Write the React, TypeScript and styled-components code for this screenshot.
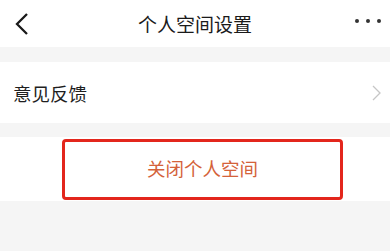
import { createGlobalStyle } from "styled-components";
import styled from "styled-components";

const GlobalStyle = createGlobalStyle`
	html, body {
		margin: 0;
		padding: 0;
		background-color: #f5f5f5;
		font-family: "Noto Sans CJK SC", "Noto Sans", sans-serif;
	}
`

const Page = styled.div`
	width: 390px;
	min-height: 251px;
	background-color: #f5f5f5;
	display: flex;
	flex-direction: column;
`

const Header = styled.header`
	height: 47px;
	display: grid;
	grid-template-columns: 60px 1fr 60px;
	align-items: center;
	background-color: #fff;
	.title {
		text-align: center;
		font-size: 19px;
		color: #1a1a1a;
		line-height: 1;
		padding-bottom: 1px;
	}
	.back {
		padding-left: 14px;
		display: flex;
	}
	.more {
		display: flex;
		justify-content: flex-end;
		gap: 7px;
		padding-right: 9px;
		padding-bottom: 5px;
	}
	.more span {
		width: 4px;
		height: 4px;
		border-radius: 50%;
		background-color: #333;
	}
`

const Section = styled.section<{ $top: number }>`
	margin-top: ${(p) => p.$top}px;
	background-color: #fff;
`

const Row = styled.div`
	height: 61px;
	display: flex;
	align-items: center;
	justify-content: space-between;
	padding: 0 8px 0 13px;
	font-size: 18.5px;
	color: #1f1f1f;
`

const CloseBox = styled.div`
	height: 64px;
	display: flex;
	align-items: center;
	padding-left: 62px;
`

const CloseButton = styled.button`
	width: 281px;
	height: 61px;
	border: 3px solid #e3261c;
	border-radius: 4px;
	background-color: #fff;
	color: #d4623a;
	font-family: inherit;
	font-size: 18.5px;
	padding: 0 0 2px;
	cursor: pointer;
`

const App = () => {
	return <>
		<GlobalStyle />
		<Page>
			<Header>
				<div className="back">
					<svg width="16" height="24" viewBox="0 0 16 24">
						<path d="M13 2 L3 12 L13 22" fill="none" stroke="#1a1a1a" strokeWidth="2.3" />
					</svg>
				</div>
				<div className="title">个人空间设置</div>
				<div className="more">
					<span /><span /><span />
				</div>
			</Header>
			<Section $top={15}>
				<Row>
					<span>意见反馈</span>
					<svg width="12" height="18" viewBox="0 0 12 18">
						<path d="M3 2 L10 9 L3 16" fill="none" stroke="#c6c6c6" strokeWidth="1.3" />
					</svg>
				</Row>
			</Section>
			<Section $top={14}>
				<CloseBox>
					<CloseButton>关闭个人空间</CloseButton>
				</CloseBox>
			</Section>
		</Page>
	</>;
}

export default App;
